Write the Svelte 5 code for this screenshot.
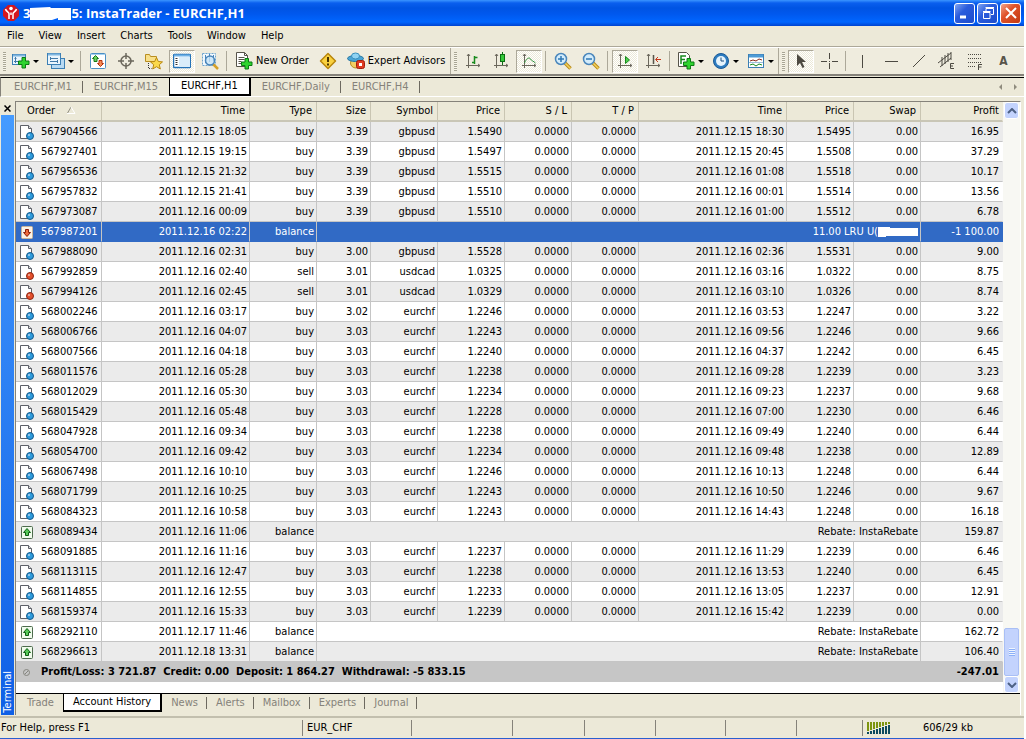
<script>
  const menus = ["File", "View", "Insert", "Charts", "Tools", "Window", "Help"];
  const charts = ["EURCHF,M1", "EURCHF,M15", "EURCHF,H1", "EURCHF,Daily", "EURCHF,H4"];
  const panels = ["Trade", "Account History", "News", "Alerts", "Mailbox", "Experts", "Journal"];

  let activeChart = $state("EURCHF,H1");
  let activePanel = $state("Account History");
  let selected = $state("567987201");

  // toolbar layout, "|" is a separator
  const standardTools = [
    { icon: "newChart", title: "New Chart", menu: true },
    { icon: "profiles", title: "Profiles", menu: true },
    "|",
    { icon: "market", title: "Market Watch" },
    { icon: "target", title: "Data Window" },
    { icon: "navigator", title: "Navigator" },
    { icon: "terminal", title: "Terminal", on: true },
    { icon: "tester", title: "Strategy Tester" },
    "|",
    { icon: "newOrder", title: "New Order", text: "New Order" },
    { icon: "warning", title: "MetaEditor" },
    { icon: "expert", title: "Expert Advisors", text: "Expert Advisors" },
  ];
  const chartTools = [
    { icon: "bars", title: "Bar Chart" },
    { icon: "candles", title: "Candlesticks" },
    { icon: "line", title: "Line Chart", on: true },
    "|",
    { icon: "zoomIn", title: "Zoom In" },
    { icon: "zoomOut", title: "Zoom Out" },
    "|",
    { icon: "scroll", title: "Auto Scroll", on: true },
    { icon: "shift", title: "Chart Shift" },
    "|",
    { icon: "indicators", title: "Indicators", menu: true },
    { icon: "clock", title: "Periods", menu: true },
    { icon: "templates", title: "Templates", menu: true },
  ];
  const lineTools = [
    { icon: "cursor", title: "Cursor", on: true },
    { icon: "cross", title: "Crosshair" },
    "|",
    { icon: "vline", title: "Vertical Line" },
    { icon: "hline", title: "Horizontal Line" },
    { icon: "trend", title: "Trendline" },
    { icon: "channel", title: "Equidistant Channel" },
    { icon: "fibo", title: "Fibonacci Retracement" },
    { icon: "text", title: "Text" },
  ];
  const toolbars = [standardTools, chartTools, lineTools];

  const columns = [
    { name: "Order", width: 86 },
    { name: "Time", width: 148 },
    { name: "Type", width: 67 },
    { name: "Size", width: 54 },
    { name: "Symbol", width: 67 },
    { name: "Price", width: 67 },
    { name: "S / L", width: 67 },
    { name: "T / P", width: 67 },
    { name: "Time", width: 148 },
    { name: "Price", width: 67 },
    { name: "Swap", width: 67 },
    { name: "Profit" },
  ];

  // order, open time, type, size, symbol, open price, close time, close price, profit
  const trades = [
    ["567904566", "2011.12.15 18:05", "buy", "3.39", "gbpusd", "1.5490", "2011.12.15 18:30", "1.5495", "16.95"],
    ["567927401", "2011.12.15 19:15", "buy", "3.39", "gbpusd", "1.5497", "2011.12.15 20:45", "1.5508", "37.29"],
    ["567956536", "2011.12.15 21:32", "buy", "3.39", "gbpusd", "1.5515", "2011.12.16 01:08", "1.5518", "10.17"],
    ["567957832", "2011.12.15 21:41", "buy", "3.39", "gbpusd", "1.5510", "2011.12.16 00:01", "1.5514", "13.56"],
    ["567973087", "2011.12.16 00:09", "buy", "3.39", "gbpusd", "1.5510", "2011.12.16 01:00", "1.5512", "6.78"],
    ["567987201", "2011.12.16 02:22", "balance", "11.00 LRU U(", "-1 100.00"],
    ["567988090", "2011.12.16 02:31", "buy", "3.00", "gbpusd", "1.5528", "2011.12.16 02:36", "1.5531", "9.00"],
    ["567992859", "2011.12.16 02:40", "sell", "3.01", "usdcad", "1.0325", "2011.12.16 03:16", "1.0322", "8.75"],
    ["567994126", "2011.12.16 02:45", "sell", "3.01", "usdcad", "1.0329", "2011.12.16 03:10", "1.0326", "8.74"],
    ["568002246", "2011.12.16 03:17", "buy", "3.02", "eurchf", "1.2246", "2011.12.16 03:53", "1.2247", "3.22"],
    ["568006766", "2011.12.16 04:07", "buy", "3.03", "eurchf", "1.2243", "2011.12.16 09:56", "1.2246", "9.66"],
    ["568007566", "2011.12.16 04:18", "buy", "3.03", "eurchf", "1.2240", "2011.12.16 04:37", "1.2242", "6.45"],
    ["568011576", "2011.12.16 05:28", "buy", "3.03", "eurchf", "1.2238", "2011.12.16 09:28", "1.2239", "3.23"],
    ["568012029", "2011.12.16 05:30", "buy", "3.03", "eurchf", "1.2234", "2011.12.16 09:23", "1.2237", "9.68"],
    ["568015429", "2011.12.16 05:48", "buy", "3.03", "eurchf", "1.2228", "2011.12.16 07:00", "1.2230", "6.46"],
    ["568047928", "2011.12.16 09:34", "buy", "3.03", "eurchf", "1.2238", "2011.12.16 09:49", "1.2240", "6.44"],
    ["568054700", "2011.12.16 09:42", "buy", "3.03", "eurchf", "1.2234", "2011.12.16 09:48", "1.2238", "12.89"],
    ["568067498", "2011.12.16 10:10", "buy", "3.03", "eurchf", "1.2246", "2011.12.16 10:13", "1.2248", "6.44"],
    ["568071799", "2011.12.16 10:25", "buy", "3.03", "eurchf", "1.2243", "2011.12.16 10:50", "1.2246", "9.67"],
    ["568084323", "2011.12.16 10:58", "buy", "3.03", "eurchf", "1.2243", "2011.12.16 14:43", "1.2248", "16.18"],
    ["568089434", "2011.12.16 11:06", "balance", "Rebate: InstaRebate", "159.87"],
    ["568091885", "2011.12.16 11:16", "buy", "3.03", "eurchf", "1.2237", "2011.12.16 11:29", "1.2239", "6.46"],
    ["568113115", "2011.12.16 12:47", "buy", "3.03", "eurchf", "1.2238", "2011.12.16 13:53", "1.2240", "6.45"],
    ["568114855", "2011.12.16 12:55", "buy", "3.03", "eurchf", "1.2233", "2011.12.16 13:05", "1.2237", "12.91"],
    ["568159374", "2011.12.16 15:33", "buy", "3.03", "eurchf", "1.2239", "2011.12.16 15:42", "1.2239", "0.00"],
    ["568292110", "2011.12.17 11:46", "balance", "Rebate: InstaRebate", "162.72"],
    ["568296613", "2011.12.18 13:31", "balance", "Rebate: InstaRebate", "106.40"],
  ];

  const statusPanes = [109, 101, 72, 71, 70, 71, 66];
</script>

{#snippet plus(x, y)}
  <path
    transform="translate({x} {y})"
    d="M4 .5h3.500v3.500h3.500v3.500h-3.500v3.500h-3.500v-3.500h-3.500v-3.500h3.500z"
    fill="#2fd32f"
    stroke="#0b7a14"
  />
{/snippet}

{#snippet axes()}
  <path d="M4.500 2v14M2 13.500h14M3 4l1.500-2 1.500 2M14 12l2 1.500-2 1.500" fill="none" stroke="#6b675c" />
{/snippet}

{#snippet lens()}
  <path d="M11 11l5.500 5.500" stroke="#b98a1a" stroke-width="3.500" />
  <path d="M11 11l5.500 5.500" stroke="#f3d25c" stroke-width="1.500" />
  <circle cx="7" cy="7" r="5.500" fill="#d3ecfb" stroke="#4a86bb" stroke-width="1.500" />
{/snippet}

{#snippet icon(name)}
  <svg class="icon" viewBox="0 0 18 18" width="18" height="18" aria-hidden="true">
    {#if name === "newChart"}
      <rect x=".5" y="2.500" width="13" height="10" fill="#eaf5fd" stroke="#3c7fb4" />
      <path d="M1 3.500h12" stroke="#7fb6e0" stroke-width="2" />
      <path d="M3.500 5v6M2 9.500h8M2.500 6.500h2" stroke="#4179a8" fill="none" />
      {@render plus(6, 5)}
    {:else if name === "profiles"}
      <rect x="4.500" y="6.500" width="13" height="10" fill="#b9daf2" stroke="#3c7fb4" />
      <rect x=".5" y="1.500" width="13" height="11" fill="#eaf5fd" stroke="#3c7fb4" />
      <path d="M1 2.500h12" stroke="#7fb6e0" stroke-width="2" />
      <path d="M3 6.500h8M3 9.500h8M3.500 5v3M10.500 8v3" stroke="#4179a8" />
    {:else if name === "market"}
      <rect x="1.500" y="1.500" width="15" height="15" rx="1" fill="#fff" stroke="#4b8fc4" />
      <path d="M2 2.500h14" stroke="#a8d2f0" />
      <path d="M6.500 3.500l3 3h-1.500v3h-3v-3H3.500z" fill="#69d05c" stroke="#187a18" />
      <path d="M11.500 14.500l3-3h-1.500v-3h-3v3H8.500z" fill="#f58a54" stroke="#b5330e" />
    {:else if name === "target"}
      <circle cx="9" cy="9" r="5" fill="none" stroke="#6b675c" stroke-width="1.500" />
      <path d="M9 1v6M9 11v6M1 9h6M11 9h6" stroke="#6b675c" stroke-width="1.500" />
    {:else if name === "navigator"}
      <path d="M.5 9.500v-7h4l1 2h6v5z" fill="#f8e08a" stroke="#b98e20" />
      <path d="M3.500 11v5.500h3" fill="none" stroke="#333" stroke-dasharray="1 1" />
      <path d="M11.500 5.500l1.800 4 4.200.4-3.200 2.800 1 4.300-3.800-2.300L7.700 17l1-4.300-3.200-2.800 4.200-.4z" fill="#fbd94b" stroke="#b88710" />
    {:else if name === "terminal"}
      <rect x=".5" y="2.500" width="17" height="13" rx="1" fill="#fff" stroke="#2472b8" stroke-width="1.500" />
      <path d="M1 3.500h16" stroke="#6eb1e6" stroke-width="2" />
      <path d="M6 5h11v10H6z" fill="#d9ecfa" />
      <path d="M2.500 6.500h2M2.500 8.500h2M2.500 10.500h2M2.500 12.500h2" stroke="#333" />
    {:else if name === "tester"}
      <rect x="1.500" y="1.500" width="13" height="12" fill="#f2f9fe" stroke="#6fa5cf" stroke-dasharray="2 1" />
      <path d="M4.500 3v8M8.500 2v8M12.500 3v6" stroke="#4a86bb" />
      <path d="M12 12l5 5" stroke="#d6a128" stroke-width="2.500" />
      <circle cx="9" cy="8.500" r="4.500" fill="#c6e4f8" fill-opacity=".8" stroke="#4a86bb" stroke-width="1.500" />
    {:else if name === "newOrder"}
      <path d="M1.500.5h8l3 3v11h-11z" fill="#fff" stroke="#57544a" />
      <path d="M9.500.5v3h3M3.500 5.500h6M3.500 7.500h6M3.500 9.500h3M3.500 11.500h3" fill="none" stroke="#57544a" />
      {@render plus(6, 6)}
    {:else if name === "warning"}
      <path d="M9 1.500L16.500 9 9 16.500 1.500 9z" fill="#f9d13f" stroke="#b8860b" stroke-width="1.500" stroke-linejoin="round" />
      <path d="M9 5v5M9 11.500v2" stroke="#4a3500" stroke-width="2" />
    {:else if name === "expert"}
      <ellipse cx="9" cy="11" rx="5.500" ry="5" fill="#f2cf63" stroke="#b98e20" />
      <ellipse cx="8.500" cy="6.500" rx="8" ry="3" fill="#4aa5d6" stroke="#24749f" />
      <ellipse cx="8.500" cy="4" rx="4" ry="3" fill="#8fd3f3" stroke="#3a90bd" />
      <rect x="9.500" y="8.500" width="8" height="8" rx="2" fill="#df3a20" stroke="#a31c0b" />
      <rect x="12" y="11" width="3" height="3" fill="#fff" />
    {:else if name === "bars"}
      {@render axes()}
      <path d="M10.500 4v8M8 10.500h2.500M10.500 5.500h3" fill="none" stroke="#178a1c" stroke-width="1.500" />
    {:else if name === "candles"}
      {@render axes()}
      <path d="M10.500 0v13" stroke="#0c6e12" />
      <rect x="8.500" y="2.500" width="4" height="7" fill="#35c93a" stroke="#0c6e12" />
    {:else if name === "line"}
      {@render axes()}
      <path d="M4.500 11c2-5 5-6 6-4s3 2 5 4" fill="none" stroke="#2d8f3a" />
    {:else if name === "zoomIn"}
      {@render lens()}
      <path d="M4 7h6M7 4v6" stroke="#2f78b5" stroke-width="1.500" />
    {:else if name === "zoomOut"}
      {@render lens()}
      <path d="M4 7h6" stroke="#2f78b5" stroke-width="1.500" />
    {:else if name === "scroll"}
      {@render axes()}
      <path d="M9.500 4.500v7l4-3.500z" fill="#4fce4f" stroke="#178a1c" />
    {:else if name === "shift"}
      {@render axes()}
      <path d="M9.500 3v9" stroke="#57544a" stroke-width="1.500" />
      <path d="M17 7.500h-5M14 5l-2.500 2.500L14 10" fill="none" stroke="#c5381a" />
    {:else if name === "indicators"}
      <path d="M1.500.5h8l3 3v11h-11z" fill="#fff" stroke="#57544a" />
      <path d="M4 12V4h5M4 7.500h4" fill="none" stroke="#178a1c" stroke-width="1.500" />
      {@render plus(6, 6)}
    {:else if name === "clock"}
      <circle cx="9" cy="9" r="7.500" fill="#2d7cc0" stroke="#1b5a96" />
      <circle cx="9" cy="9" r="5" fill="#e6f4fd" />
      <path d="M9 5.500V9h3" fill="none" stroke="#1b4d7f" />
    {:else if name === "templates"}
      <rect x="1.500" y="2.500" width="15" height="13" fill="#fff" stroke="#3c7fb4" />
      <path d="M2 4h14" stroke="#4d9bd6" stroke-width="3" />
      <path d="M3 9l3-1 3 1 3-2 3 1" fill="none" stroke="#8a2c1c" />
      <path d="M2 10.500h14" stroke="#9dbfd9" />
      <path d="M3 13l3-1 3 2 3-2 3 1" fill="none" stroke="#178a1c" />
    {:else if name === "cursor"}
      <path d="M5 2v12l3-3 2.500 5 2-1-2.500-5h4z" fill="#4d4a42" />
    {:else if name === "cross"}
      <path d="M9.500 1v6M9.500 11v6M1 9.500h6M12 9.500h6M9 9.500h1" stroke="#4d4a42" />
    {:else if name === "vline"}
      <path d="M8.500 3v13" stroke="#4d4a42" />
    {:else if name === "hline"}
      <path d="M3 9.500h13" stroke="#4d4a42" />
    {:else if name === "trend"}
      <path d="M3 15L15 3" stroke="#4d4a42" />
    {:else if name === "channel"}
      <path d="M0 11L13 1M2 15L13 6M4 5v9M7 3v9M10 1v9M13 0v8" fill="none" stroke="#4d4a42" />
      <path d="M16 11.500h-3.500v5H16M12.500 14H15" fill="none" stroke="#4d4a42" />
    {:else if name === "fibo"}
      <path d="M2 2.500h14M2 6.500h14M2 10.500h14M2 14.500h8" stroke="#4d4a42" stroke-dasharray="1 1" />
      <path d="M16 12.500h-3.500V18M12.500 15h3" fill="none" stroke="#4d4a42" />
    {/if}
  </svg>
{/snippet}

{#snippet rowIcon(type, profit)}
  <svg class="row-icon" viewBox="0 0 16 16" width="16" height="16" aria-hidden="true">
    {#if type === "balance"}
      <rect x="3.500" y="2.500" width="11" height="12" rx="1" fill={profit.startsWith("-") ? "#fdf3e6" : "#f0fbec"} stroke={profit.startsWith("-") ? "#c9b49a" : "#4d6b4d"} />
      {#if profit.startsWith("-")}
        <path d="M9 12.500l3.500-4h-2v-3h-3v3h-2z" fill="#ef6a3a" stroke="#8c1d08" />
      {:else}
        <path d="M9 4.500l3.500 4h-2v3h-3v-3h-2z" fill="#56c956" stroke="#0c5e12" />
      {/if}
    {:else}
      <path d="M2.500 1.500h8l3 3v10h-11z" fill="#fff" stroke="#5d6068" />
      <path d="M10.500 1.500v3h3" fill="#ddd" stroke="#5d6068" />
      <circle cx="12" cy="12" r="3.500" fill={type === "sell" ? "#e3502c" : "#2f9bdc"} stroke={type === "sell" ? "#8f2410" : "#12598c"} />
      <circle cx="11" cy="11" r="1" fill="#fff" fill-opacity=".6" />
    {/if}
  </svg>
{/snippet}

<div class="window">
  <header class="titlebar">
    <svg viewBox="0 0 16 16" width="16" height="16" aria-hidden="true">
      <path d="M5 0h6l5 5v6l-5 5H5l-5-5V5z" fill="#d3171e" />
      <circle cx="8" cy="3.500" r="1.800" fill="#fff" />
      <path d="M2.500 4c.5 2.500 3.500 3 3.500 4.500V14M13.500 4c-.5 2.500-3.500 3-3.500 4.500V14M8 7.500V10" fill="none" stroke="#fff" stroke-width="1.500" />
    </svg>
    <h1>
      3<svg class="redact" viewBox="0 0 41 14" width="41" height="14" aria-hidden="true">
        <path d="M0 1l20-1 1 1h20v12H28v-2l-6 2H0z" fill="#fff" />
      </svg>5: InstaTrader - EURCHF,H1
    </h1>
    <button class="win-btn" aria-label="Minimize">
      <svg viewBox="0 0 18 18" width="18" height="18"><path d="M4 13h6" stroke="#fff" stroke-width="3" /></svg>
    </button>
    <button class="win-btn" aria-label="Restore">
      <svg viewBox="0 0 18 18" width="18" height="18" fill="none" stroke="#fff">
        <path d="M7 7V4.500h7.500v6H12M6.500 3.500h8.500M4.500 8.500h6.500v6H4.500zM4 7.500h7.500" />
      </svg>
    </button>
    <button class="win-btn close" aria-label="Close">
      <svg viewBox="0 0 18 18" width="18" height="18"><path d="M4 4l10 10M14 4L4 14" stroke="#fff" stroke-width="2" /></svg>
    </button>
  </header>

  <nav class="menubar">
    {#each menus as menu}
      <button>{menu}</button>
    {/each}
  </nav>

  <div class="toolbars">
    {#each toolbars as tools}
      <div class="toolbar" role="toolbar">
        <span class="grip"></span>
        {#each tools as tool}
          {#if tool === "|"}
            <span class="sep"></span>
          {:else}
            <button
              class="tool"
              class:on={tool.on}
              class:wide={tool.text}
              class:drop={tool.menu}
              title={tool.title}
              aria-label={tool.title}
            >
              {#if tool.icon === "text"}
                <span class="letter">A</span>
              {:else}
                {@render icon(tool.icon)}
              {/if}
              {#if tool.text}<span>{tool.text}</span>{/if}
              {#if tool.menu}<span class="caret"></span>{/if}
            </button>
          {/if}
        {/each}
      </div>
    {/each}
  </div>

  <div class="chart-tabs">
    {#each charts as chart}
      <button class="tab" class:active={activeChart === chart} onclick={() => (activeChart = chart)}>{chart}</button>
    {/each}
    <span class="tab-scroll">
      <button aria-label="Previous chart"><svg viewBox="0 0 4 8" width="4" height="8"><path d="M4 1v6L1 4z" fill="#8f8c7e" /></svg></button>
      <button aria-label="Next chart"><svg viewBox="0 0 4 8" width="4" height="8"><path d="M0 1v6l3-3z" fill="#8f8c7e" /></svg></button>
    </span>
  </div>

  <section class="terminal">
    <aside class="caption">
      <button aria-label="Close terminal">
        <svg viewBox="0 0 7 7" width="7" height="7"><path d="M.5.5l6 6M6.500.5l-6 6" stroke="#000" stroke-width="1.500" /></svg>
      </button>
      <div class="caption-bar"><span>Terminal</span></div>
    </aside>

    <div class="history">
      <div class="grid">
        <table>
          <colgroup>
            {#each columns as col}
              <col style:width={col.width ? col.width + "px" : "auto"} />
            {/each}
          </colgroup>
          <thead>
            <tr>
              {#each columns as col, i}
                <th>
                  {col.name}{#if i === 0}<svg class="sort" viewBox="0 0 9 7" width="9" height="7" aria-hidden="true"><path d="M0 7L4 0" stroke="#8f8c7e" /><path d="M4 0l4 6.500H0" fill="none" stroke="#fff" /></svg>{/if}
                </th>
              {/each}
            </tr>
          </thead>
          <tbody>
            {#each trades as row (row[0])}
              <tr class:selected={selected === row[0]} onclick={() => (selected = row[0])}>
                <td>{@render rowIcon(row[2], row[row.length - 1])}{row[0]}</td>
                <td>{row[1]}</td>
                <td>{row[2]}</td>
                {#if row[2] === "balance"}
                  <td colspan="8">
                    {row[3]}{#if row[3].endsWith("(")}<svg class="redact" viewBox="0 0 40 12" width="40" height="12" aria-hidden="true"><path d="M0 1h12v1h28v8H8v1H0z" fill="#fff" /></svg>{/if}
                  </td>
                  <td>{row[4]}</td>
                {:else}
                  <td>{row[3]}</td>
                  <td>{row[4]}</td>
                  <td>{row[5]}</td>
                  <td>0.0000</td>
                  <td>0.0000</td>
                  <td>{row[6]}</td>
                  <td>{row[7]}</td>
                  <td>0.00</td>
                  <td>{row[8]}</td>
                {/if}
              </tr>
            {/each}
          </tbody>
          <tfoot>
            <tr>
              <td colspan="11">
                <svg class="row-icon" viewBox="0 0 16 16" width="16" height="16" aria-hidden="true">
                  <circle cx="8.500" cy="8.500" r="3" fill="none" stroke="#85857f" />
                  <path d="M7 10l3-3" stroke="#85857f" />
                </svg>Profit/Loss: 3 721.87&nbsp; Credit: 0.00&nbsp; Deposit: 1 864.27&nbsp; Withdrawal: -5 833.15
              </td>
              <td>-247.01</td>
            </tr>
          </tfoot>
        </table>
        <div class="scrollbar">
          <button class="scroll-btn" aria-label="Scroll up">
            <svg viewBox="0 0 10 6" width="10" height="6"><path d="M1 5l4-4 4 4" fill="none" stroke="#4d6185" stroke-width="2" /></svg>
          </button>
          <div class="thumb"><span></span></div>
          <button class="scroll-btn" aria-label="Scroll down">
            <svg viewBox="0 0 10 6" width="10" height="6"><path d="M1 1l4 4 4-4" fill="none" stroke="#4d6185" stroke-width="2" /></svg>
          </button>
        </div>
      </div>

      <div class="panel-tabs">
        {#each panels as panel}
          <button class="tab" class:active={activePanel === panel} onclick={() => (activePanel = panel)}>{panel}</button>
        {/each}
      </div>
    </div>
  </section>

  <footer class="statusbar">
    <span class="help">For Help, press F1</span>
    {#each statusPanes as width, i}
      <span class="pane" style:width="{width}px">{i === 0 ? "EUR_CHF" : ""}</span>
    {/each}
    <span class="traffic">
      <svg viewBox="0 0 24 12" width="24" height="12" aria-hidden="true">
        {#each [0, 1, 2, 3, 4, 5, 6, 7] as n}
          <rect x={n * 3} y="0" width="2" height={9 - n} fill="#7d9410" />
          <rect x={n * 3} y={10 - n} width="2" height={n + 2} fill="#0d4a5e" />
        {/each}
      </svg>
      606/29 kb
    </span>
  </footer>
</div>

<style>
  :global(body) {
    background: #fff;
    padding-right: 2px;
  }

  .window {
    display: flex;
    flex-direction: column;
    min-height: 100vh;
    box-sizing: border-box;
    background: #ece9d8;
    border-bottom: 1px solid #2a5fd0;
    font-family: "DejaVu Sans Condensed", "DejaVu Sans", Tahoma, sans-serif;
    font-size: 11px;
    line-height: 14px;
    color: #000;
  }

  button {
    font: inherit;
    color: inherit;
    background: none;
    border: none;
    padding: 0;
    margin: 0;
    white-space: nowrap;
  }

  svg {
    display: block;
    flex: none;
  }

  /* title */
  .titlebar {
    display: flex;
    align-items: center;
    gap: 2px;
    height: 26px;
    padding: 0 3px;
    background: linear-gradient(#3b95ff 0, #0a5fee 3px, #0054e3 8px, #0058ee 14px, #0066ff 22px, #0043cf 26px);
  }

  h1 {
    flex: 1;
    margin: 0 0 0 2px;
    font-family: "Open Sans", "Trebuchet MS", sans-serif;
    font-size: 13px;
    line-height: 16px;
    color: #fff;
    white-space: nowrap;
  }

  .redact {
    display: inline-block;
    vertical-align: middle;
  }

  .win-btn {
    width: 21px;
    height: 21px;
    display: grid;
    place-items: center;
    box-sizing: border-box;
    border: 1px solid #fff;
    border-radius: 3px;
    background: linear-gradient(135deg, #7fa4f2, #2a5cdc 40%, #1c4ccc);
  }

  .win-btn.close {
    background: linear-gradient(135deg, #f0a58c, #e0532a 40%, #c23a14);
  }

  /* menu */
  .menubar {
    display: flex;
    height: 20px;
    border-bottom: 1px solid #aca899;
  }

  .menubar button {
    padding: 0 8px 0 7px;
  }

  /* toolbars */
  .toolbars {
    display: flex;
    height: 26px;
    border-top: 1px solid #fff;
    border-bottom: 2px solid #85827a;
    background: #efecde;
  }

  .toolbar {
    display: flex;
    align-items: center;
    border-right: 1px solid #aca899;
  }

  .toolbar:last-child {
    flex: 1;
    border-right: none;
  }

  .grip {
    width: 3px;
    height: 19px;
    margin: 0 2px 0 3px;
    background: repeating-linear-gradient(#a8a594 0, #a8a594 1px, #f7f5ea 1px, #f7f5ea 2px);
  }

  .sep {
    width: 1px;
    height: 20px;
    margin: 0 3px 0 2px;
    background: #aca899;
  }

  .tool {
    display: flex;
    align-items: center;
    justify-content: center;
    box-sizing: border-box;
    width: 26px;
    height: 23px;
    margin: 0 1px;
  }

  .tool.on {
    border: 1px solid;
    border-color: #aca899 #fff #fff #aca899;
    background: repeating-conic-gradient(#fff 0 25%, #ece9d8 0 50%) 0 0 / 2px 2px;
  }

  .tool.wide {
    width: auto;
    gap: 3px;
    padding: 0 4px;
  }

  .tool.drop {
    width: 33px;
    gap: 3px;
  }

  .caret {
    border: 3px solid transparent;
    border-top-color: #000;
    border-bottom: none;
  }

  .letter {
    font-size: 12px;
    font-weight: bold;
    color: #57544a;
  }

  /* tabs */
  .tab {
    display: flex;
    align-items: center;
    padding: 0 11px;
    color: #85827a;
    position: relative;
  }

  .tab::after {
    content: "";
    position: absolute;
    right: 0;
    height: 12px;
    border-right: 1px solid #6d6a60;
  }

  .tab.active {
    background: #fff;
    color: #000;
    border: solid #000;
    border-width: 0 2px 2px 1px;
  }

  .tab.active::after,
  .tab:has(+ .active)::after {
    display: none;
  }

  .chart-tabs {
    display: flex;
    height: 18px;
    margin-top: 1px;
    padding-left: 2px;
    border-top: 1px solid #000;
    border-left: 1px solid #85827a;
    border-bottom: 1px solid #fff;
  }

  .tab-scroll {
    display: flex;
    align-items: center;
    gap: 12px;
    margin-left: auto;
    padding-right: 6px;
  }

  /* terminal */
  .terminal {
    flex: 1;
    display: flex;
    margin-top: 4px;
    padding-right: 3px;
  }

  .caption {
    display: flex;
    flex-direction: column;
    width: 13px;
    padding: 0 1px;
  }

  .caption button {
    height: 14px;
    display: grid;
    place-items: center;
  }

  .caption-bar {
    flex: 1;
    display: flex;
    justify-content: center;
    align-items: flex-end;
    background: linear-gradient(#459bff, #0f60e6);
    color: #fff;
  }

  .caption-bar span {
    writing-mode: vertical-rl;
    transform: rotate(180deg);
    padding-top: 2px;
    line-height: 13px;
  }

  .history {
    flex: 1;
    display: flex;
    flex-direction: column;
    border-top: 1px solid #85827a;
    border-left: 1px solid #85827a;
    border-right: 1px solid #fff;
  }

  .grid {
    flex: 1;
    display: flex;
    align-items: flex-start;
    background: #fff;
  }

  table {
    flex: 1;
    width: 0;
    table-layout: fixed;
    border-collapse: separate;
    border-spacing: 0;
  }

  th,
  td {
    box-sizing: border-box;
    height: 20px;
    padding: 0 2px;
    text-align: right;
    white-space: nowrap;
    overflow: hidden;
    border-right: 1px solid #c5c5c5;
    border-bottom: 1px solid #c5c5c5;
  }

  th {
    padding-right: 4px;
    font-weight: normal;
    background: #ece9d8;
    border-right-color: #c9c5b2;
    border-bottom: 2px solid #c9c6b6;
  }

  th:first-child {
    padding-left: 11px;
    text-align: left;
  }

  td:first-child {
    text-align: left;
  }

  th:last-child,
  td:last-child {
    padding-right: 3px;
    border-right-color: transparent;
  }

  tbody tr:nth-child(odd) {
    background: #ebebeb;
  }

  tbody tr.selected {
    background: #316ac5;
    color: #fff;
  }

  .selected td {
    border-bottom-color: #316ac5;
  }

  tfoot td {
    background: #c6c6c6;
    border-color: #c6c6c6;
    font-weight: bold;
  }

  .sort {
    display: inline-block;
    margin-left: 12px;
  }

  .row-icon {
    display: inline-block;
    vertical-align: middle;
    margin-right: 7px;
  }

  .scrollbar {
    align-self: stretch;
    display: flex;
    flex-direction: column;
    width: 17px;
    background: #f8f8f3;
  }

  .scroll-btn {
    height: 17px;
    margin: 0 1px;
    display: grid;
    place-items: center;
    border: 1px solid #fff;
    border-radius: 3px;
    background: #c3d3fd;
    box-sizing: border-box;
  }

  .thumb {
    display: grid;
    place-items: center;
    height: 48px;
    margin: auto 1px 0;
    border: 1px solid #a9bff5;
    border-radius: 2px;
    box-sizing: border-box;
    background: #c3d3fd;
  }

  .thumb span {
    width: 6px;
    height: 8px;
    background: repeating-linear-gradient(#eef4fe 0, #eef4fe 1px, #8cb0f8 1px, #8cb0f8 2px);
  }

  .panel-tabs {
    display: flex;
    height: 18px;
    padding: 0 0 3px 2px;
    border-top: 1px solid #000;
  }

  .panel-tabs .tab {
    padding: 0 9px;
  }

  /* status */
  .statusbar {
    display: flex;
    align-items: center;
    height: 20px;
    margin-top: 1px;
    border-top: 2px solid #c2bfae;
  }

  .help {
    flex: 1;
    padding-left: 1px;
  }

  .pane,
  .traffic {
    height: 16px;
    line-height: 16px;
    box-sizing: border-box;
    padding-left: 4px;
    border-left: 1px solid #85827a;
  }

  .traffic {
    display: flex;
    align-items: center;
    gap: 32px;
    width: 162px;
  }
</style>
